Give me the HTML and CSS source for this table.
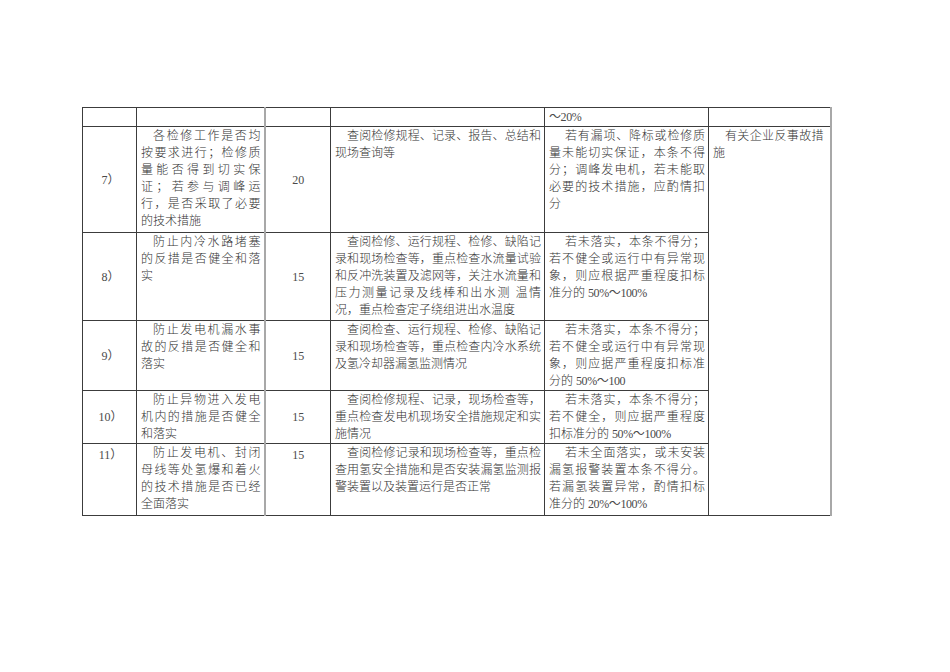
FILE: index.html
```html
<!DOCTYPE html>
<html lang="zh">
<head>
<meta charset="utf-8">
<title>检修工作检查表</title>
<link rel="stylesheet" href="styles.css">
</head>
<body>
<div class="page">
<table class="sheet">
  <colgroup>
    <col class="c1"><col class="c2"><col class="c3"><col class="c4"><col class="c5"><col class="c6">
  </colgroup>
  <tr class="r0">
    <td></td><td></td><td class="num b3"></td><td></td>
    <td class="txt"><span class="ln n">～20%</span></td>
    <td class="last"></td>
  </tr>
  <tr class="r7">
    <td class="idx">7）</td>
    <td class="txt"><span class="ln in j">各检修工作是否均</span><span class="ln j">按要求进行；检修质</span><span class="ln j">量能否得到切实保</span><span class="ln j">证；若参与调峰运</span><span class="ln j">行，是否采取了必要</span><span class="ln">的技术措施</span></td>
    <td class="num b3">20</td>
    <td class="txt"><span class="ln in j">查阅检修规程、记录、报告、总结和</span><span class="ln">现场查询等</span></td>
    <td class="txt"><span class="ln in2 j">若有漏项、降标或检修质</span><span class="ln j">量未能切实保证，本条不得</span><span class="ln j">分；调峰发电机，若未能取</span><span class="ln j">必要的技术措施，应酌情扣</span><span class="ln">分</span></td>
    <td class="txt last" rowspan="5"><span class="ln in j">有关企业反事故措</span><span class="ln">施</span></td>
  </tr>
  <tr class="r8">
    <td class="idx">8）</td>
    <td class="txt"><span class="ln in j">防止内冷水路堵塞</span><span class="ln j">的反措是否健全和落</span><span class="ln">实</span></td>
    <td class="num b3">15</td>
    <td class="txt"><span class="ln in j">查阅检修、运行规程、检修、缺陷记</span><span class="ln j">录和现场检查等，重点检查水流量试验</span><span class="ln j">和反冲洗装置及滤网等，关注水流量和</span><span class="ln j">压力测量记录及线棒和出水测 温情</span><span class="ln">况，重点检查定子绕组进出水温度</span></td>
    <td class="txt"><span class="ln in2 j">若未落实，本条不得分；</span><span class="ln j">若不健全或运行中有异常现</span><span class="ln j">象，则应根据严重程度扣标</span><span class="ln">准分的 <span class="n">50%～100%</span></span></td>
  </tr>
  <tr class="r9">
    <td class="idx">9）</td>
    <td class="txt"><span class="ln in j">防止发电机漏水事</span><span class="ln j">故的反措是否健全和</span><span class="ln">落实</span></td>
    <td class="num b3">15</td>
    <td class="txt"><span class="ln in j">查阅检查、运行规程、检修、缺陷记</span><span class="ln j">录和现场检查等，重点检查内冷水系统</span><span class="ln">及氢冷却器漏氢监测情况</span></td>
    <td class="txt"><span class="ln in2 j">若未落实，本条不得分；</span><span class="ln j">若不健全或运行中有异常现</span><span class="ln j">象，则应据严重程度扣标准</span><span class="ln">分的 <span class="n">50%～100</span></span></td>
  </tr>
  <tr class="r10">
    <td class="idx">10）</td>
    <td class="txt"><span class="ln in j">防止异物进入发电</span><span class="ln j">机内的措施是否健全</span><span class="ln">和落实</span></td>
    <td class="num b3">15</td>
    <td class="txt"><span class="ln in j">查阅检修规程、记录，现场检查等，</span><span class="ln j">重点检查发电机现场安全措施规定和实</span><span class="ln">施情况</span></td>
    <td class="txt"><span class="ln in2 j">若未落实，本条不得分；</span><span class="ln j">若不健全，则应据严重程度</span><span class="ln">扣标准分的 <span class="n">50%～100%</span></span></td>
  </tr>
  <tr class="r11">
    <td class="idx top">11）</td>
    <td class="txt"><span class="ln in j">防止发电机、封闭</span><span class="ln j">母线等处氢爆和着火</span><span class="ln j">的技术措施是否已经</span><span class="ln">全面落实</span></td>
    <td class="num b3 top">15</td>
    <td class="txt"><span class="ln in j">查阅检修记录和现场检查等，重点检</span><span class="ln j">查用氢安全措施和是否安装漏氢监测报</span><span class="ln">警装置以及装置运行是否正常</span></td>
    <td class="txt"><span class="ln in2 j">若未全面落实，或未安装</span><span class="ln j">漏氢报警装置本条不得分。</span><span class="ln j">若漏氢装置异常，酌情扣标</span><span class="ln">准分的 <span class="n">20%～100%</span></span></td>
  </tr>
</table>
</div>
</body>
</html>
```
FILE: styles.css
```css
html, body {
  margin: 0;
  padding: 0;
  background: #ffffff;
}

.page {
  padding: 107px 0 0 82px;
}

.sheet {
  border-collapse: collapse;
  table-layout: fixed;
  width: 748px;
  font-family: "Liberation Serif", "Noto Sans CJK SC", serif;
  font-size: 12px;
  font-weight: 300;
  line-height: 17px;
  color: #333333;
}

.c1 { width: 54px; }
.c2 { width: 128px; }
.c3 { width: 66px; }
.c4 { width: 214px; }
.c5 { width: 164px; }
.c6 { width: 122px; }

.sheet td {
  border: 1px solid #3c3c3c;
  padding: 1px 3px 0 4px;
  vertical-align: top;
  overflow: hidden;
}

.sheet td.b3 {
  border-left: 2px solid #a8a8a8;
}

.sheet td.last {
  border-right: 2px solid #a8a8a8;
  padding-right: 6px;
}

.r0 { height: 16px; }
.r7 { height: 106px; }
.r8 { height: 88px; }
.r9 { height: 69px; }
.r10 { height: 52px; }
.r11 { height: 72px; }

.sheet td.idx {
  text-align: center;
  vertical-align: middle;
  font-size: 12px;
  font-weight: 400;
  color: #4a4a4a;
  padding-left: 4px;
  padding-right: 2px;
}

.sheet td.num {
  text-align: center;
  vertical-align: middle;
  font-size: 12px;
  font-weight: 400;
  color: #4a4a4a;
}

.sheet td.top {
  vertical-align: top;
  padding-top: 3px;
}

.ln {
  display: block;
  white-space: nowrap;
}

.ln.j {
  text-align: justify;
  text-align-last: justify;
}

.ln.in {
  text-indent: 12px;
}

.ln.in2 {
  text-indent: 16px;
}

.n {
  font-size: 12px;
  font-weight: 400;
  color: #4a4a4a;
  letter-spacing: -0.4px;
}
```
